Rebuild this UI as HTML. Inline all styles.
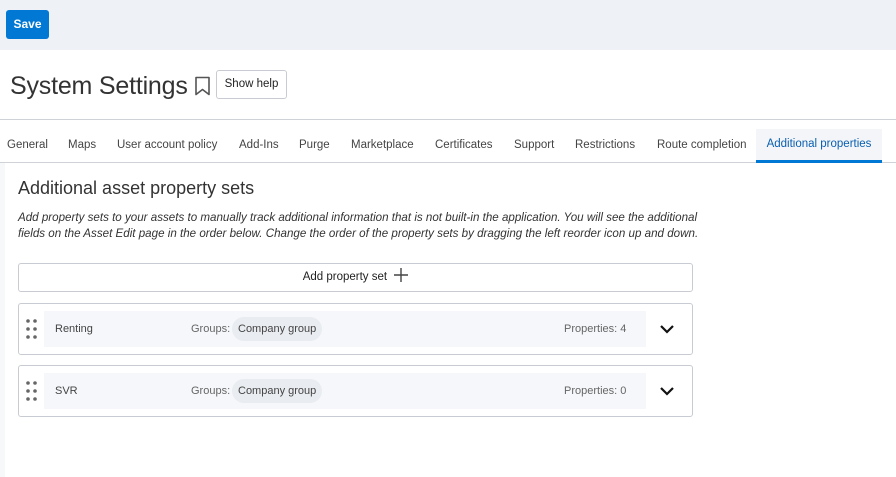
<!DOCTYPE html>
<html><head><style>
*{box-sizing:border-box;margin:0;padding:0}
body{width:896px;height:477px;background:#fff;font-family:"Liberation Sans",sans-serif;color:#333;position:relative;overflow:hidden}
.top{position:absolute;left:0;top:0;width:896px;height:50px;background:#eef1f6}
.save{position:absolute;left:6px;top:10px;width:43px;height:29px;background:#0078d4;border-radius:3px;color:#fff;font-size:12px;font-weight:bold;text-align:center;line-height:29px}
.leftstrip{position:absolute;left:0;top:162px;width:5px;height:315px;background:#f7f8fa}
h1{position:absolute;left:10px;top:72px;font-size:25px;font-weight:normal;color:#333;letter-spacing:-0.2px}
.bm{position:absolute;left:194px;top:76px}
.help{position:absolute;left:216px;top:70px;width:71px;height:29px;border:1px solid #c8ccd2;border-radius:3px;font-size:11.5px;text-align:center;line-height:27px;color:#222}
.l1{position:absolute;left:0;top:119px;width:896px;height:1px;background:#cfd3d8}
.l2{position:absolute;left:0;top:162px;width:896px;height:1px;background:#cfd3d8}
.tab{position:absolute;top:139px;font-size:11.5px;color:#444}
.act{position:absolute;left:756px;top:129px;width:126px;height:34px;background:#f3f5f8;border-bottom:3px solid #0078d4;color:#0a5fb0;font-size:11.5px;text-align:center;line-height:31px}
h2{position:absolute;left:18px;top:178px;font-size:18px;font-weight:normal;color:#333}
.desc{position:absolute;left:18px;top:210px;font-size:11.6px;font-style:italic;line-height:16px;color:#333;width:720px}
.add{position:absolute;left:18px;top:263px;width:675px;height:29px;border:1px solid #c8ccd2;border-radius:3px;font-size:11.5px;text-align:center;line-height:27px;color:#222}
.card{position:absolute;left:18px;width:675px;height:52px;border:1px solid #c8ccd2;border-radius:3px}
.inner{position:absolute;left:25px;top:7px;width:602px;height:36px;background:#f5f7fa;font-size:11px;color:#444}
.dots{position:absolute;left:7px;top:15px}
.chip{position:absolute;left:188px;top:6px;height:24px;padding:0 6px;background:#e9ecf0;border-radius:12px;line-height:24px}
.chev{position:absolute;left:640px;top:20px}
</style></head><body>
<div class="top"></div>
<div class="save">Save</div>
<div class="leftstrip"></div>
<h1>System Settings</h1>
<svg class="bm" width="18" height="20" viewBox="0 0 18 20"><path d="M2 1.5h13v17l-6.5-5-6.5 5z" fill="none" stroke="#555" stroke-width="1.6" stroke-linejoin="round"/></svg>
<div class="help">Show help</div>
<div class="l1"></div>
<span class="tab" style="left:7px">General</span>
<span class="tab" style="left:68px">Maps</span>
<span class="tab" style="left:117px">User account policy</span>
<span class="tab" style="left:239px">Add-Ins</span>
<span class="tab" style="left:299px">Purge</span>
<span class="tab" style="left:351px">Marketplace</span>
<span class="tab" style="left:435px">Certificates</span>
<span class="tab" style="left:514px">Support</span>
<span class="tab" style="left:575px">Restrictions</span>
<span class="tab" style="left:657px">Route completion</span>
<div class="l2"></div>
<div class="act">Additional properties</div>
<h2>Additional asset property sets</h2>
<div class="desc">Add property sets to your assets to manually track additional information that is not built-in the application. You will see the additional<br>fields on the Asset Edit page in the order below. Change the order of the property sets by dragging the left reorder icon up and down.</div>
<div class="add">Add property set <svg width="14" height="14" viewBox="0 0 14 14" style="vertical-align:-2px;margin-left:4px"><path d="M7 0v14M0 7h14" stroke="#444" stroke-width="1.4"/></svg></div>
<div class="card" style="top:303px">
<svg class="dots" width="12" height="20"><g fill="#666"><circle cx="2" cy="2" r="1.8"/><circle cx="9" cy="2" r="1.8"/><circle cx="2" cy="10" r="1.8"/><circle cx="9" cy="10" r="1.8"/><circle cx="2" cy="18" r="1.8"/><circle cx="9" cy="18" r="1.8"/></g></svg>
<div class="inner"><span style="position:absolute;left:11px;top:12px">Renting</span><span style="position:absolute;left:147px;top:12px;color:#666">Groups:</span><span class="chip">Company group</span><span style="position:absolute;left:520px;top:12px;color:#666">Properties: 4</span></div>
<svg class="chev" width="16" height="12"><path d="M2 2l6 6 6-6" fill="none" stroke="#111" stroke-width="2.2"/></svg>
</div>
<div class="card" style="top:365px">
<svg class="dots" width="12" height="20"><g fill="#666"><circle cx="2" cy="2" r="1.8"/><circle cx="9" cy="2" r="1.8"/><circle cx="2" cy="10" r="1.8"/><circle cx="9" cy="10" r="1.8"/><circle cx="2" cy="18" r="1.8"/><circle cx="9" cy="18" r="1.8"/></g></svg>
<div class="inner"><span style="position:absolute;left:11px;top:12px">SVR</span><span style="position:absolute;left:147px;top:12px;color:#666">Groups:</span><span class="chip">Company group</span><span style="position:absolute;left:520px;top:12px;color:#666">Properties: 0</span></div>
<svg class="chev" width="16" height="12"><path d="M2 2l6 6 6-6" fill="none" stroke="#111" stroke-width="2.2"/></svg>
</div>
</body></html>
